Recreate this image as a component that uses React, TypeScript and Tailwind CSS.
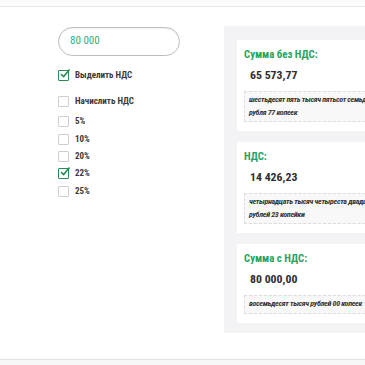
import { useState } from 'react';

const font = { fontFamily: '"Roboto Condensed", "Liberation Sans Narrow", Roboto, sans-serif' };

function Box({ checked }: { checked: boolean }) {
  return (
    <span
      className={`relative w-[11px] h-[11px] shrink-0 border-[1.5px] rounded-[1px] ${
        checked ? 'border-[#2f8a55]' : 'border-[#cfcfcf]'
      }`}
    >
      {checked && (
        <svg className="absolute -top-[3px] left-[0px]" width="12" height="12" viewBox="0 0 12 12">
          <path d="M2 6.2 L4.6 8.6 L10.5 1.5" fill="none" stroke="#2f8a55" strokeWidth="1.6" />
        </svg>
      )}
    </span>
  );
}

function Check({ label, checked, onClick, className }: { label: string; checked: boolean; onClick: () => void; className?: string }) {
  return (
    <div onClick={onClick} className={`flex items-center gap-[6px] cursor-pointer ${className ?? ''}`}>
      <Box checked={checked} />
      <span className="text-[9px] font-bold text-[#3a3a3a] leading-none">{label}</span>
    </div>
  );
}

const results = [
  { title: 'Сумма без НДС:', value: '65 573,77', words: 'шестьдесят пять тысяч пятьсот семьдесят три рубля 77 копеек' },
  { title: 'НДС:', value: '14 426,23', words: 'четырнадцать тысяч четыреста двадцать шесть рублей 23 копейки' },
  { title: 'Сумма с НДС:', value: '80 000,00', words: 'восемьдесят тысяч рублей 00 копеек' },
];

export default function App() {
  const [mode, setMode] = useState<'extract' | 'add'>('extract');
  const [rate, setRate] = useState('22%');

  return (
    <div className="w-[365px] h-[365px] overflow-hidden bg-white flex flex-col" style={font}>
      <div className="h-[6px] bg-[#fbfbfb]" />
      <div className="flex flex-1 border-t border-[#e6e6e6]">
        <div className="w-[224px] shrink-0 pl-[58px] pt-[20px]">
          <div className="w-[122px] h-[29px] rounded-full border border-[#bdbdbd] flex items-center pl-[11px] shadow-[inset_0_1px_2px_rgba(0,0,0,0.06)]">
            <span className="text-[11px] text-[#2fb277]">80 000</span>
          </div>
          <Check className="mt-[14px] h-[11px]" label="Выделить НДС" checked={mode === 'extract'} onClick={() => setMode('extract')} />
          <Check className="mt-[15px] h-[11px]" label="Начислить НДС" checked={mode === 'add'} onClick={() => setMode('add')} />
          <div className="mt-[6px] flex flex-col">
            {['5%', '10%', '20%', '22%', '25%'].map((r) => (
              <Check key={r} className="h-[17.4px]" label={r} checked={rate === r} onClick={() => setRate(r)} />
            ))}
          </div>
        </div>
        <div className="flex-1 mt-[19px] mb-[26px] bg-[#f3f3f5] pl-[13px] pt-[14px]">
          <div className="flex flex-col gap-[11px] w-[180px]">
            {results.map((r) => (
              <div key={r.title} className="bg-white pl-[7px] pr-[7px] pt-[9px] pb-[9px]">
                <div className="text-[10.8px] font-bold text-[#27a35e] leading-[11px]">{r.title}</div>
                <div className="mt-[8px] pl-[6px] text-[11.8px] font-bold text-[#2e2e2e] leading-[15px]">{r.value}</div>
                <div className="mt-[8px] border border-dashed border-[#dcdcdc] bg-[#f8f8f8] px-[4px] py-[2px]">
                  <p className="text-[8px] tracking-[-0.32px] italic font-bold text-[#333] leading-[12.5px]">{r.words}</p>
                </div>
              </div>
            ))}
          </div>
        </div>
      </div>
      <div className="h-[6px] border-t border-[#e4e4e4] bg-[#f7f7f7] shadow-[0_-1px_2px_rgba(0,0,0,0.04)]" />
    </div>
  );
}
